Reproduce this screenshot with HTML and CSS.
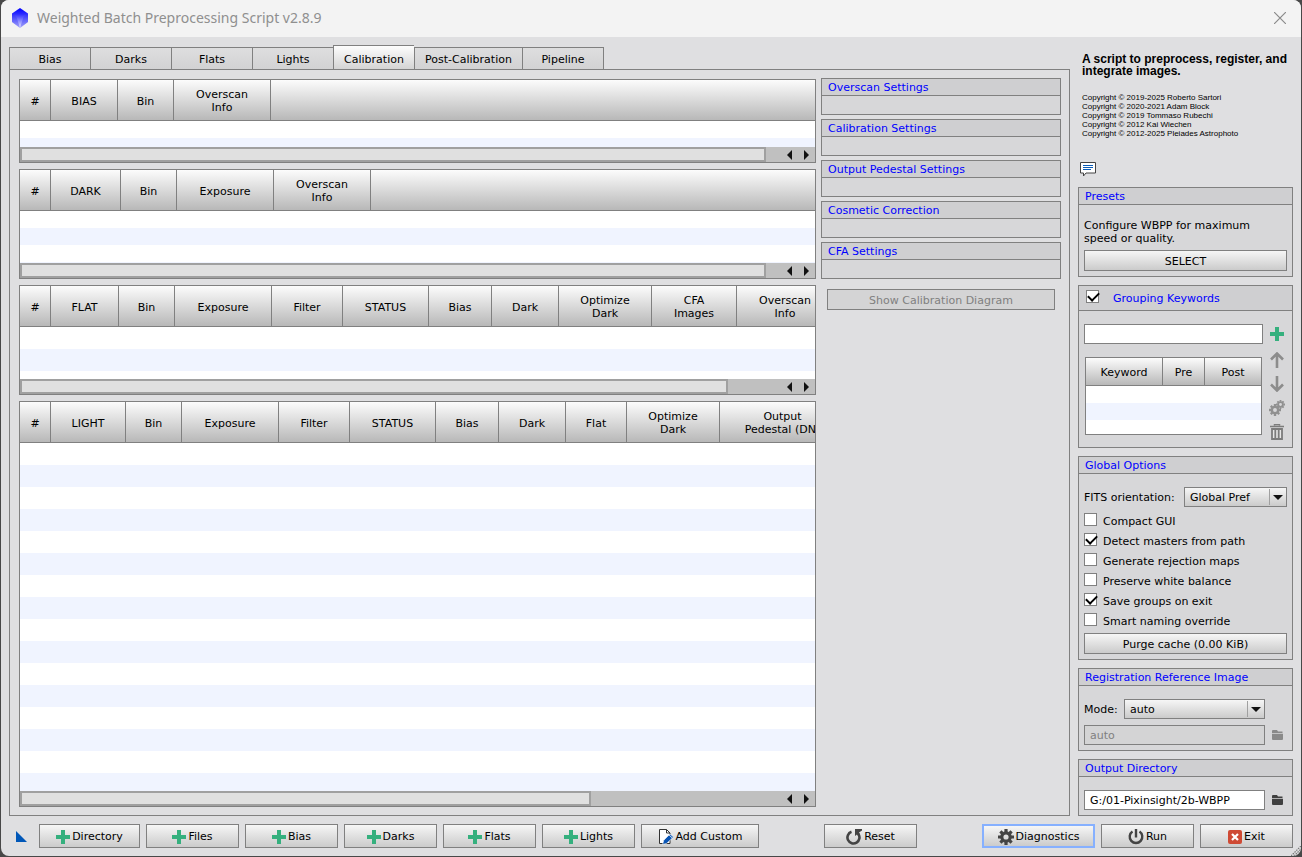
FILE: index.html
```html
<!DOCTYPE html>
<html lang="en">
<head>
    <meta charset="UTF-8">
    <meta name="viewport" content="width=device-width, initial-scale=1.0">
    <title>Weighted Batch Preprocessing Script v2.8.9</title>
    <link rel="stylesheet" href="styles.css">
</head>
<body>
    <!-- shared icons -->
    <svg class="icon-defs" aria-hidden="true">
        <symbol id="plus" viewBox="0 0 14 14"><path d="M5 0h4v5h5v4H9v5H5V9H0V5h5z" fill="#35b07e"/></symbol>
        <symbol id="folder" viewBox="0 0 11 10"><path d="M0 1q0-1 1-1h4l1 1.500h4.500V3H0zM0 3.800h11V9q0 1-1 1H1Q0 10 0 9z" fill="currentColor"/></symbol>
        <symbol id="arrow" viewBox="0 0 14 16"><path d="M7 1v15M1 7.500L7 1.500l6 6" fill="none" stroke="#8c8c8c" stroke-width="2.600"/></symbol>
        <symbol id="gear" viewBox="-8 -8 16 16">
            <circle r="4.200" fill="none" stroke="currentColor" stroke-width="3.200"/>
            <path d="M0-8V-5M0 8V5M-8 0H-5M8 0H5M-5.600-5.600l2 2M5.600 5.600l-2-2M-5.600 5.600l2-2M5.600-5.600l-2 2" stroke="currentColor" stroke-width="3.200"/>
        </symbol>
    </svg>

    <div class="window">
        <header class="titlebar">
            <svg class="logo" viewBox="0 0 16 20">
                <defs>
                    <linearGradient id="gem" x1="0" y1="0" x2="0" y2="1">
                        <stop offset="0" stop-color="#0000ff"/>
                        <stop offset="0.300" stop-color="#2a2aff"/>
                        <stop offset="1" stop-color="#eeeeff"/>
                    </linearGradient>
                </defs>
                <path d="M8 0l8 5.500v8.500L8 20 0 14V5.500z" fill="url(#gem)"/>
                <path d="M0 5.500L4.500 9 8 20 0 14zM16 5.500L11.500 9 8 20l8-6z" fill="#3434f4" opacity="0.400"/>
            </svg>
            <h1>Weighted Batch Preprocessing Script v2.8.9</h1>
            <button class="close" aria-label="Close">
                <svg viewBox="0 0 12 12"><path d="M0 0l12 12M12 0L0 12" stroke="#8a8a8a" stroke-width="1.200"/></svg>
            </button>
        </header>

        <div class="main">
            <div class="workspace">
                <div class="tabs" role="tablist">
                    <button class="tab" role="tab">Bias</button>
                    <button class="tab" role="tab">Darks</button>
                    <button class="tab" role="tab">Flats</button>
                    <button class="tab" role="tab">Lights</button>
                    <button class="tab active" role="tab" aria-selected="true">Calibration</button>
                    <button class="tab wide" role="tab">Post-Calibration</button>
                    <button class="tab" role="tab">Pipeline</button>
                </div>

                <div class="panel">
                    <div class="tables">
                        <div class="list bias-list">
                            <table>
                                <tr>
                                    <th class="c-num">#</th>
                                    <th class="c-bias">BIAS</th>
                                    <th class="c-bin">Bin</th>
                                    <th class="c-info">Overscan<br>Info</th>
                                    <td class="c-rest"></td>
                                </tr>
                            </table>
                            <div class="rows"></div>
                            <div class="scrollbar">
                                <div class="track"><div class="thumb"></div></div>
                                <button class="scroll-left" aria-label="Scroll left"></button>
                                <button class="scroll-right" aria-label="Scroll right"></button>
                            </div>
                        </div>

                        <div class="list dark-list">
                            <table>
                                <tr>
                                    <th class="c-num">#</th>
                                    <th class="c-dark-name">DARK</th>
                                    <th class="c-bin">Bin</th>
                                    <th class="c-info">Exposure</th>
                                    <th class="c-info">Overscan<br>Info</th>
                                    <td class="c-rest"></td>
                                </tr>
                            </table>
                            <div class="rows"></div>
                            <div class="scrollbar">
                                <div class="track"><div class="thumb"></div></div>
                                <button class="scroll-left" aria-label="Scroll left"></button>
                                <button class="scroll-right" aria-label="Scroll right"></button>
                            </div>
                        </div>

                        <div class="list flat-list">
                            <table>
                                <tr>
                                    <th class="c-num">#</th>
                                    <th class="c-flat-name">FLAT</th>
                                    <th class="c-bin">Bin</th>
                                    <th class="c-info">Exposure</th>
                                    <th class="c-filter">Filter</th>
                                    <th class="c-status">STATUS</th>
                                    <th class="c-use-bias">Bias</th>
                                    <th class="c-use-dark">Dark</th>
                                    <th class="c-optimize">Optimize<br>Dark</th>
                                    <th class="c-cfa">CFA<br>Images</th>
                                    <th class="c-info">Overscan<br>Info</th>
                                </tr>
                            </table>
                            <div class="rows tall"></div>
                            <div class="scrollbar">
                                <div class="track"><div class="thumb"></div></div>
                                <button class="scroll-left" aria-label="Scroll left"></button>
                                <button class="scroll-right" aria-label="Scroll right"></button>
                            </div>
                        </div>

                        <div class="list light-list">
                            <table>
                                <tr>
                                    <th class="c-num">#</th>
                                    <th class="c-light-name">LIGHT</th>
                                    <th class="c-bin">Bin</th>
                                    <th class="c-info">Exposure</th>
                                    <th class="c-filter">Filter</th>
                                    <th class="c-status">STATUS</th>
                                    <th class="c-use-bias">Bias</th>
                                    <th class="c-use-dark">Dark</th>
                                    <th class="c-use-flat">Flat</th>
                                    <th class="c-optimize">Optimize<br>Dark</th>
                                    <th class="c-pedestal">Output<br>Pedestal (DN)</th>
                                </tr>
                            </table>
                            <div class="rows tall"></div>
                            <div class="scrollbar">
                                <div class="track"><div class="thumb"></div></div>
                                <button class="scroll-left" aria-label="Scroll left"></button>
                                <button class="scroll-right" aria-label="Scroll right"></button>
                            </div>
                        </div>
                    </div>

                    <div class="settings">
                        <section class="group collapsed"><h2>Overscan Settings</h2></section>
                        <section class="group collapsed"><h2>Calibration Settings</h2></section>
                        <section class="group collapsed"><h2>Output Pedestal Settings</h2></section>
                        <section class="group collapsed"><h2>Cosmetic Correction</h2></section>
                        <section class="group collapsed"><h2>CFA Settings</h2></section>
                        <button class="btn diagram" disabled>Show Calibration Diagram</button>
                    </div>
                </div>
            </div>

            <aside class="sidebar">
                <div class="about">
                    <p class="about-title">A script to preprocess, register, and integrate images.</p>
                    <p class="copyright">
                        Copyright © 2019-2025 Roberto Sartori<br>
                        Copyright © 2020-2021 Adam Block<br>
                        Copyright © 2019 Tommaso Rubechi<br>
                        Copyright © 2012 Kai Wiechen<br>
                        Copyright © 2012-2025 Pleiades Astrophoto
                    </p>
                </div>
                <button class="icon-btn comment" aria-label="Messages">
                    <svg viewBox="0 0 16 15">
                        <path d="M0.500 0.500h15v10.500H6L3.500 14v-3h-3z" fill="#fff" stroke="#444"/>
                        <path d="M3 3.500h10M3 5.500h10M3 7.500h8" stroke="#0a5cb8"/>
                    </svg>
                </button>

                <section class="group">
                    <h2>Presets</h2>
                    <div class="group-body">
                        <p class="hint">Configure WBPP for maximum speed or quality.</p>
                        <button class="btn select-btn">SELECT</button>
                    </div>
                </section>

                <section class="group">
                    <h2 class="check-title">
                        <input type="checkbox" id="grouping" checked>
                        <label for="grouping">Grouping Keywords</label>
                    </h2>
                    <div class="group-body keyword-body">
                        <div class="field-row">
                            <input type="text" class="field" aria-label="New keyword">
                            <button class="icon-btn" aria-label="Add keyword"><svg class="i14"><use href="#plus"/></svg></button>
                        </div>
                        <div class="keywords">
                            <div class="list keyword-list">
                                <table>
                                    <tr>
                                        <th class="c-keyword">Keyword</th>
                                        <th class="c-pre">Pre</th>
                                        <th>Post</th>
                                    </tr>
                                </table>
                                <div class="rows"></div>
                            </div>
                            <div class="keyword-tools">
                                <button class="icon-btn" aria-label="Move up"><svg class="arrow-up"><use href="#arrow"/></svg></button>
                                <button class="icon-btn" aria-label="Move down"><svg class="arrow-down"><use href="#arrow"/></svg></button>
                                <button class="icon-btn" aria-label="Keyword settings">
                                    <svg class="gears" viewBox="0 0 16 16">
                                        <use href="#gear" x="7" y="0" width="9" height="9"/>
                                        <use href="#gear" x="0" y="4" width="12" height="12"/>
                                    </svg>
                                </button>
                                <button class="icon-btn" aria-label="Remove keyword">
                                    <svg class="trash" viewBox="0 0 14 16">
                                        <path d="M4.500 1.500V0.500h5v1M0 2.500h14" fill="none" stroke="#7c7c7c" stroke-width="1.500"/>
                                        <path d="M2 5h10v10H2zM5.300 6v8M8.700 6v8" fill="#e6e6e6" stroke="#7c7c7c" stroke-width="1.800"/>
                                    </svg>
                                </button>
                            </div>
                        </div>
                    </div>
                </section>

                <section class="group">
                    <h2>Global Options</h2>
                    <div class="group-body">
                        <div class="combo-row">
                            <label for="fits">FITS orientation:</label>
                            <span class="combo fits-combo">
                                <select id="fits"><option>Global Pref</option></select>
                            </span>
                        </div>
                        <div class="checks">
                            <label><input type="checkbox">Compact GUI</label>
                            <label><input type="checkbox" checked>Detect masters from path</label>
                            <label><input type="checkbox">Generate rejection maps</label>
                            <label><input type="checkbox">Preserve white balance</label>
                            <label><input type="checkbox" checked>Save groups on exit</label>
                            <label><input type="checkbox">Smart naming override</label>
                        </div>
                        <button class="btn">Purge cache (0.00 KiB)</button>
                    </div>
                </section>

                <section class="group">
                    <h2>Registration Reference Image</h2>
                    <div class="group-body">
                        <div class="combo-row mode-row">
                            <label for="mode">Mode:</label>
                            <span class="combo">
                                <select id="mode"><option>auto</option></select>
                            </span>
                        </div>
                        <div class="field-row">
                            <input type="text" class="field" value="auto" aria-label="Reference image" disabled>
                            <button class="icon-btn folder muted" aria-label="Choose reference image" disabled><svg><use href="#folder"/></svg></button>
                        </div>
                    </div>
                </section>

                <section class="group">
                    <h2>Output Directory</h2>
                    <div class="group-body">
                        <div class="field-row">
                            <input type="text" class="field" value="G:/01-Pixinsight/2b-WBPP" aria-label="Output directory">
                            <button class="icon-btn folder" aria-label="Choose output directory"><svg><use href="#folder"/></svg></button>
                        </div>
                    </div>
                </section>
            </aside>
        </div>

        <footer class="actions">
            <button class="icon-btn instance" aria-label="New instance">
                <svg viewBox="0 0 11 11"><path d="M0 0l11 11H0z" fill="#0057b8"/></svg>
            </button>
            <div class="action-group">
                <button class="btn directory"><svg class="i14"><use href="#plus"/></svg>Directory</button>
                <button class="btn"><svg class="i14"><use href="#plus"/></svg>Files</button>
                <button class="btn"><svg class="i14"><use href="#plus"/></svg>Bias</button>
                <button class="btn"><svg class="i14"><use href="#plus"/></svg>Darks</button>
                <button class="btn"><svg class="i14"><use href="#plus"/></svg>Flats</button>
                <button class="btn"><svg class="i14"><use href="#plus"/></svg>Lights</button>
                <button class="btn custom">
                    <svg class="i16" viewBox="0 0 16 16">
                        <path d="M1.500 0.500h7l3.500 3.500v10.500H1.500z" fill="#fff" stroke="#333"/>
                        <path d="M8.500 0.500V4H12" fill="none" stroke="#333"/>
                        <path d="M4.500 15.500l1.300-4.300 6.200-6.200 3.500 3-6.700 6.300z" fill="#0a55b5" stroke="#fff" stroke-width="0.600"/>
                        <path d="M11 6l3.300 3" stroke="#fff" stroke-width="0.800"/>
                    </svg>
                    Add Custom
                </button>
            </div>
            <button class="btn reset">
                <svg class="i16" viewBox="0 0 16 16">
                    <path d="M5.500 2.800A6 6 0 1 0 12.200 4.800" fill="none" stroke="#444" stroke-width="2.600"/>
                    <path d="M9 0h7v1.500L13 3.500l1 2-2 1.500-1-1.500L9 7z" fill="#444"/>
                </svg>
                Reset
            </button>
            <div class="action-group">
                <button class="btn diagnostics"><svg class="i16"><use href="#gear"/></svg>Diagnostics</button>
                <button class="btn">
                    <svg class="i16" viewBox="0 0 16 16">
                        <path d="M4.500 2.500a6.300 6.300 0 1 0 7 0M8 0v8.500" fill="none" stroke="#444" stroke-width="2.400"/>
                    </svg>
                    Run
                </button>
                <button class="btn">
                    <svg class="i14" viewBox="0 0 14 14">
                        <rect width="14" height="14" rx="2" fill="#cf4a34"/>
                        <path d="M4 4l6 6M10 4l-6 6" stroke="#fff" stroke-width="2.200"/>
                    </svg>
                    Exit
                </button>
            </div>
        </footer>

        <svg class="grip" viewBox="0 0 10 10">
            <path d="M0 10L10 0M3 10l7-7M6 10l4-4M9 10l1-1" stroke="#777" stroke-width="1.200" stroke-dasharray="1.500 1"/>
        </svg>
    </div>
</body>
</html>
```
FILE: styles.css
```css
* {
    margin: 0;
    padding: 0;
    box-sizing: border-box;
}

body {
    background-color: #484848;
    font-family: "DejaVu Sans", Verdana, sans-serif;
    font-size: 11px;
    line-height: 13px;
    color: #000;
}

button,
input,
select {
    font: inherit;
    color: inherit;
}

.icon-defs {
    display: none;
}

.window {
    position: relative;
    display: flex;
    flex-direction: column;
    min-height: calc(100vh - 1px);
    margin: 0 1px 1px;
    border-radius: 8px;
    background-color: #dfdfe1;
    overflow: hidden;
}

/* Title bar */
.titlebar {
    display: flex;
    align-items: center;
    height: 37px;
    padding: 0 15px 1px 11px;
    background-color: #f3f3f3;
}

.logo {
    width: 16px;
    height: 20px;
    margin-right: 9px;
}

.titlebar h1 {
    flex: 1;
    font-family: "Noto Sans", "Segoe UI", sans-serif;
    font-size: 14px;
    font-weight: normal;
    line-height: 20px;
    color: #8f8f8f;
}

.close {
    width: 12px;
    height: 12px;
    border: none;
    background: none;
}

.close svg {
    display: block;
}

/* Layout */
.main {
    flex: 1;
    display: flex;
    gap: 8px;
    padding: 8px;
}

.workspace {
    flex: 1;
    min-width: 0;
    display: flex;
    flex-direction: column;
}

.tabs {
    display: flex;
    align-items: flex-end;
}

.tab {
    width: 81px;
    height: 22px;
    padding-top: 2px;
    border: 1px solid #808080;
    border-width: 1px 0 0 1px;
    background: linear-gradient(#dededf, #d2d2d3);
}

.tab.wide {
    width: 108px;
}

.tab.active {
    height: 24px;
    padding-top: 4px;
    background: linear-gradient(#fdfdfd, #d4d4d4);
}

.tab:last-child {
    width: 82px;
    border-right-width: 1px;
}

.panel {
    flex: 1;
    display: flex;
    gap: 5px;
    padding: 8px 8px 8px 9px;
    border: 1px solid #808080;
}

.tables {
    flex: 1;
    min-width: 0;
    display: flex;
    flex-direction: column;
    gap: 6px;
    padding-top: 1px;
}

/* Lists */
.list {
    display: flex;
    flex-direction: column;
    border: 1px solid #808080;
    overflow: hidden;
}

.bias-list {
    height: 84px;
}

.dark-list,
.flat-list {
    height: 110px;
}

.light-list {
    flex: 1;
}

.list table {
    width: 100%;
    table-layout: fixed;
    border-spacing: 0;
}

.list th,
.list td {
    height: 41px;
    padding-top: 2px;
    border-right: 1px solid #808080;
    border-bottom: 1px solid #808080;
    background: linear-gradient(#fcfcfc, #b8b8b8);
    font-weight: normal;
    text-align: center;
    white-space: nowrap;
}

.list .c-rest {
    border-right: none;
}

.c-num { width: 31px; }
.c-bias { width: 67px; }
.c-dark-name { width: 70px; }
.c-flat-name { width: 68px; }
.c-light-name { width: 75px; }
.c-bin { width: 56px; }
.c-info { width: 97px; }
.c-filter { width: 71px; }
.c-status { width: 86px; }
.c-use-bias { width: 63px; }
.c-use-dark { width: 67px; }
.c-use-flat { width: 61px; }
.c-optimize { width: 93px; }
.c-cfa { width: 85px; }
.c-pedestal { width: 126px; }
.c-keyword { width: 77px; }
.c-pre { width: 42px; }

.rows {
    flex: 1;
    background: repeating-linear-gradient(#fff 0 17px, #f0f4ff 17px 34px);
}

.rows.tall {
    background: repeating-linear-gradient(#fff 0 22px, #f0f4ff 22px 44px);
}

.scrollbar {
    display: flex;
    height: 15px;
    background-color: #c0c0c0;
}

.track {
    flex: 1;
}

.thumb {
    width: 98%;
    height: 15px;
    border: 2px solid #a0a0a0;
    background-color: #e0e0e0;
}

.flat-list .thumb {
    width: 93%;
}

.light-list .thumb {
    width: 75%;
}

.scroll-left,
.scroll-right {
    display: flex;
    align-items: center;
    justify-content: center;
    width: 17px;
    border: none;
    background: none;
}

.scroll-left::before,
.scroll-right::before {
    content: "";
    border: 5px solid transparent;
}

.scroll-left::before {
    border-left-width: 0;
    border-right-color: #111;
}

.scroll-right::before {
    border-right-width: 0;
    border-left-color: #111;
}

/* Group boxes */
.settings {
    width: 240px;
    display: flex;
    flex-direction: column;
    gap: 4px;
}

.group {
    border: 1px solid #808080;
    background-color: #d7d7d9;
}

.group h2 {
    height: 17px;
    padding: 0 6px;
    border-bottom: 1px solid #808080;
    background-color: #cfcfd1;
    font-size: 11px;
    font-weight: normal;
    line-height: 17px;
    color: #0000ff;
}

.group.collapsed {
    height: 37px;
}

.group h2.check-title {
    display: flex;
    gap: 14px;
    height: 25px;
    padding: 4px 7px 0;
}

.group-body {
    padding: 13px 5px 5px;
}

.group-body.keyword-body {
    padding-bottom: 3px;
}

/* Controls */
.btn {
    display: flex;
    align-items: center;
    justify-content: center;
    gap: 2px;
    width: 100%;
    height: 21px;
    padding-top: 1px;
    border: 1px solid #808080;
    background: linear-gradient(#f6f6f6, #cbcbcb);
}

.btn:disabled {
    background: #d4d4d5;
    color: #808080;
}

.btn.diagram {
    width: auto;
    margin: 6px 6px 0;
}

.hint {
    padding: 1px 20px 0 0;
}

.btn.select-btn {
    margin-top: 5px;
}

.i14 {
    width: 14px;
    height: 14px;
}

.i16 {
    width: 16px;
    height: 16px;
    color: #444;
}

.icon-btn {
    display: flex;
    align-items: center;
    justify-content: center;
    width: 20px;
    height: 20px;
    border: none;
    background: none;
}

.field {
    flex: 1;
    min-width: 0;
    height: 20px;
    padding: 1px 5px 0;
    border: 1px solid #808080;
    background-color: #fff;
}

.field:disabled {
    background-color: #d4d4d5;
    color: #808080;
}

.field-row {
    display: flex;
    gap: 4px;
}

input[type="checkbox"] {
    appearance: none;
    flex: none;
    width: 13px;
    height: 13px;
    border: 1px solid #808080;
    background-color: #fff;
}

input[type="checkbox"]:checked::before {
    content: "";
    display: block;
    width: 9px;
    height: 5px;
    margin: 1px;
    border: solid #000;
    border-width: 0 0 2px 2px;
    transform: rotate(-45deg);
}

.combo {
    position: relative;
    flex: 1;
}

.combo::after {
    content: "";
    position: absolute;
    top: 8px;
    right: 4px;
    border: 5px solid transparent;
    border-top-color: #111;
    border-bottom: none;
    pointer-events: none;
}

.combo::before {
    content: "";
    position: absolute;
    top: 2px;
    bottom: 2px;
    right: 17px;
    border-left: 1px solid #a0a0a0;
    pointer-events: none;
}

.combo select {
    display: block;
    appearance: none;
    width: 100%;
    height: 20px;
    padding: 1px 18px 0 5px;
    border: 1px solid #808080;
    border-radius: 0;
    background: linear-gradient(#f6f6f6, #cbcbcb);
}

.combo-row {
    display: flex;
    align-items: center;
    gap: 4px;
}

.fits-combo {
    flex: none;
    width: 103px;
    margin-left: auto;
}

.mode-row {
    margin: 0 22px 6px 0;
}

.mode-row label {
    width: 36px;
}

.checks {
    padding: 4px 0 2px;
}

.checks label {
    display: flex;
    gap: 6px;
    height: 20px;
    padding-top: 2px;
    line-height: 17px;
}

/* Sidebar */
.sidebar {
    width: 215px;
    display: flex;
    flex-direction: column;
    gap: 8px;
}

.about {
    padding: 8px 4px 0;
    font-family: "Liberation Sans", Arial, sans-serif;
}

.about-title {
    font-size: 12px;
    font-weight: bold;
    line-height: 12px;
}

.copyright {
    margin-top: 16px;
    font-size: 8px;
    line-height: 9px;
}

.comment {
    margin-top: 13px;
}

.comment svg {
    width: 16px;
    height: 15px;
}

.keywords {
    display: flex;
    gap: 5px;
    margin-top: 4px;
}

.keyword-list {
    flex: 1;
    height: 78px;
    margin: 9px 0 0 1px;
}

.keyword-list th {
    height: 28px;
}

.keyword-list th:last-child {
    border-right: none;
}

.keyword-tools .icon-btn {
    height: 24px;
}

.arrow-up,
.arrow-down,
.trash {
    width: 14px;
    height: 16px;
}

.arrow-down {
    transform: rotate(180deg);
}

.gears {
    width: 16px;
    height: 16px;
    color: #909090;
}

.folder {
    width: 18px;
    padding-right: 2px;
    color: #404040;
}

.folder svg {
    width: 11px;
    height: 10px;
}

.folder.muted {
    color: #8a8a8a;
}

/* Bottom actions */
.actions {
    display: flex;
    align-items: center;
    justify-content: space-between;
    padding: 0 8px 8px;
}

.action-group {
    display: flex;
    gap: 6px;
}

.actions .btn {
    width: 93px;
    height: 24px;
}

.actions .btn.directory {
    width: 101px;
}

.actions .btn.custom {
    width: 118px;
}

.actions .btn.diagnostics {
    width: 113px;
    border: 2px solid #86b0ff;
}

.instance {
    width: 24px;
}

.instance + .action-group {
    margin: 0 auto 0 6px;
}

.reset {
    margin-right: 65px;
}

.instance svg {
    width: 11px;
    height: 11px;
}

.grip {
    position: absolute;
    right: 0;
    bottom: 0;
    width: 10px;
    height: 10px;
}
```
